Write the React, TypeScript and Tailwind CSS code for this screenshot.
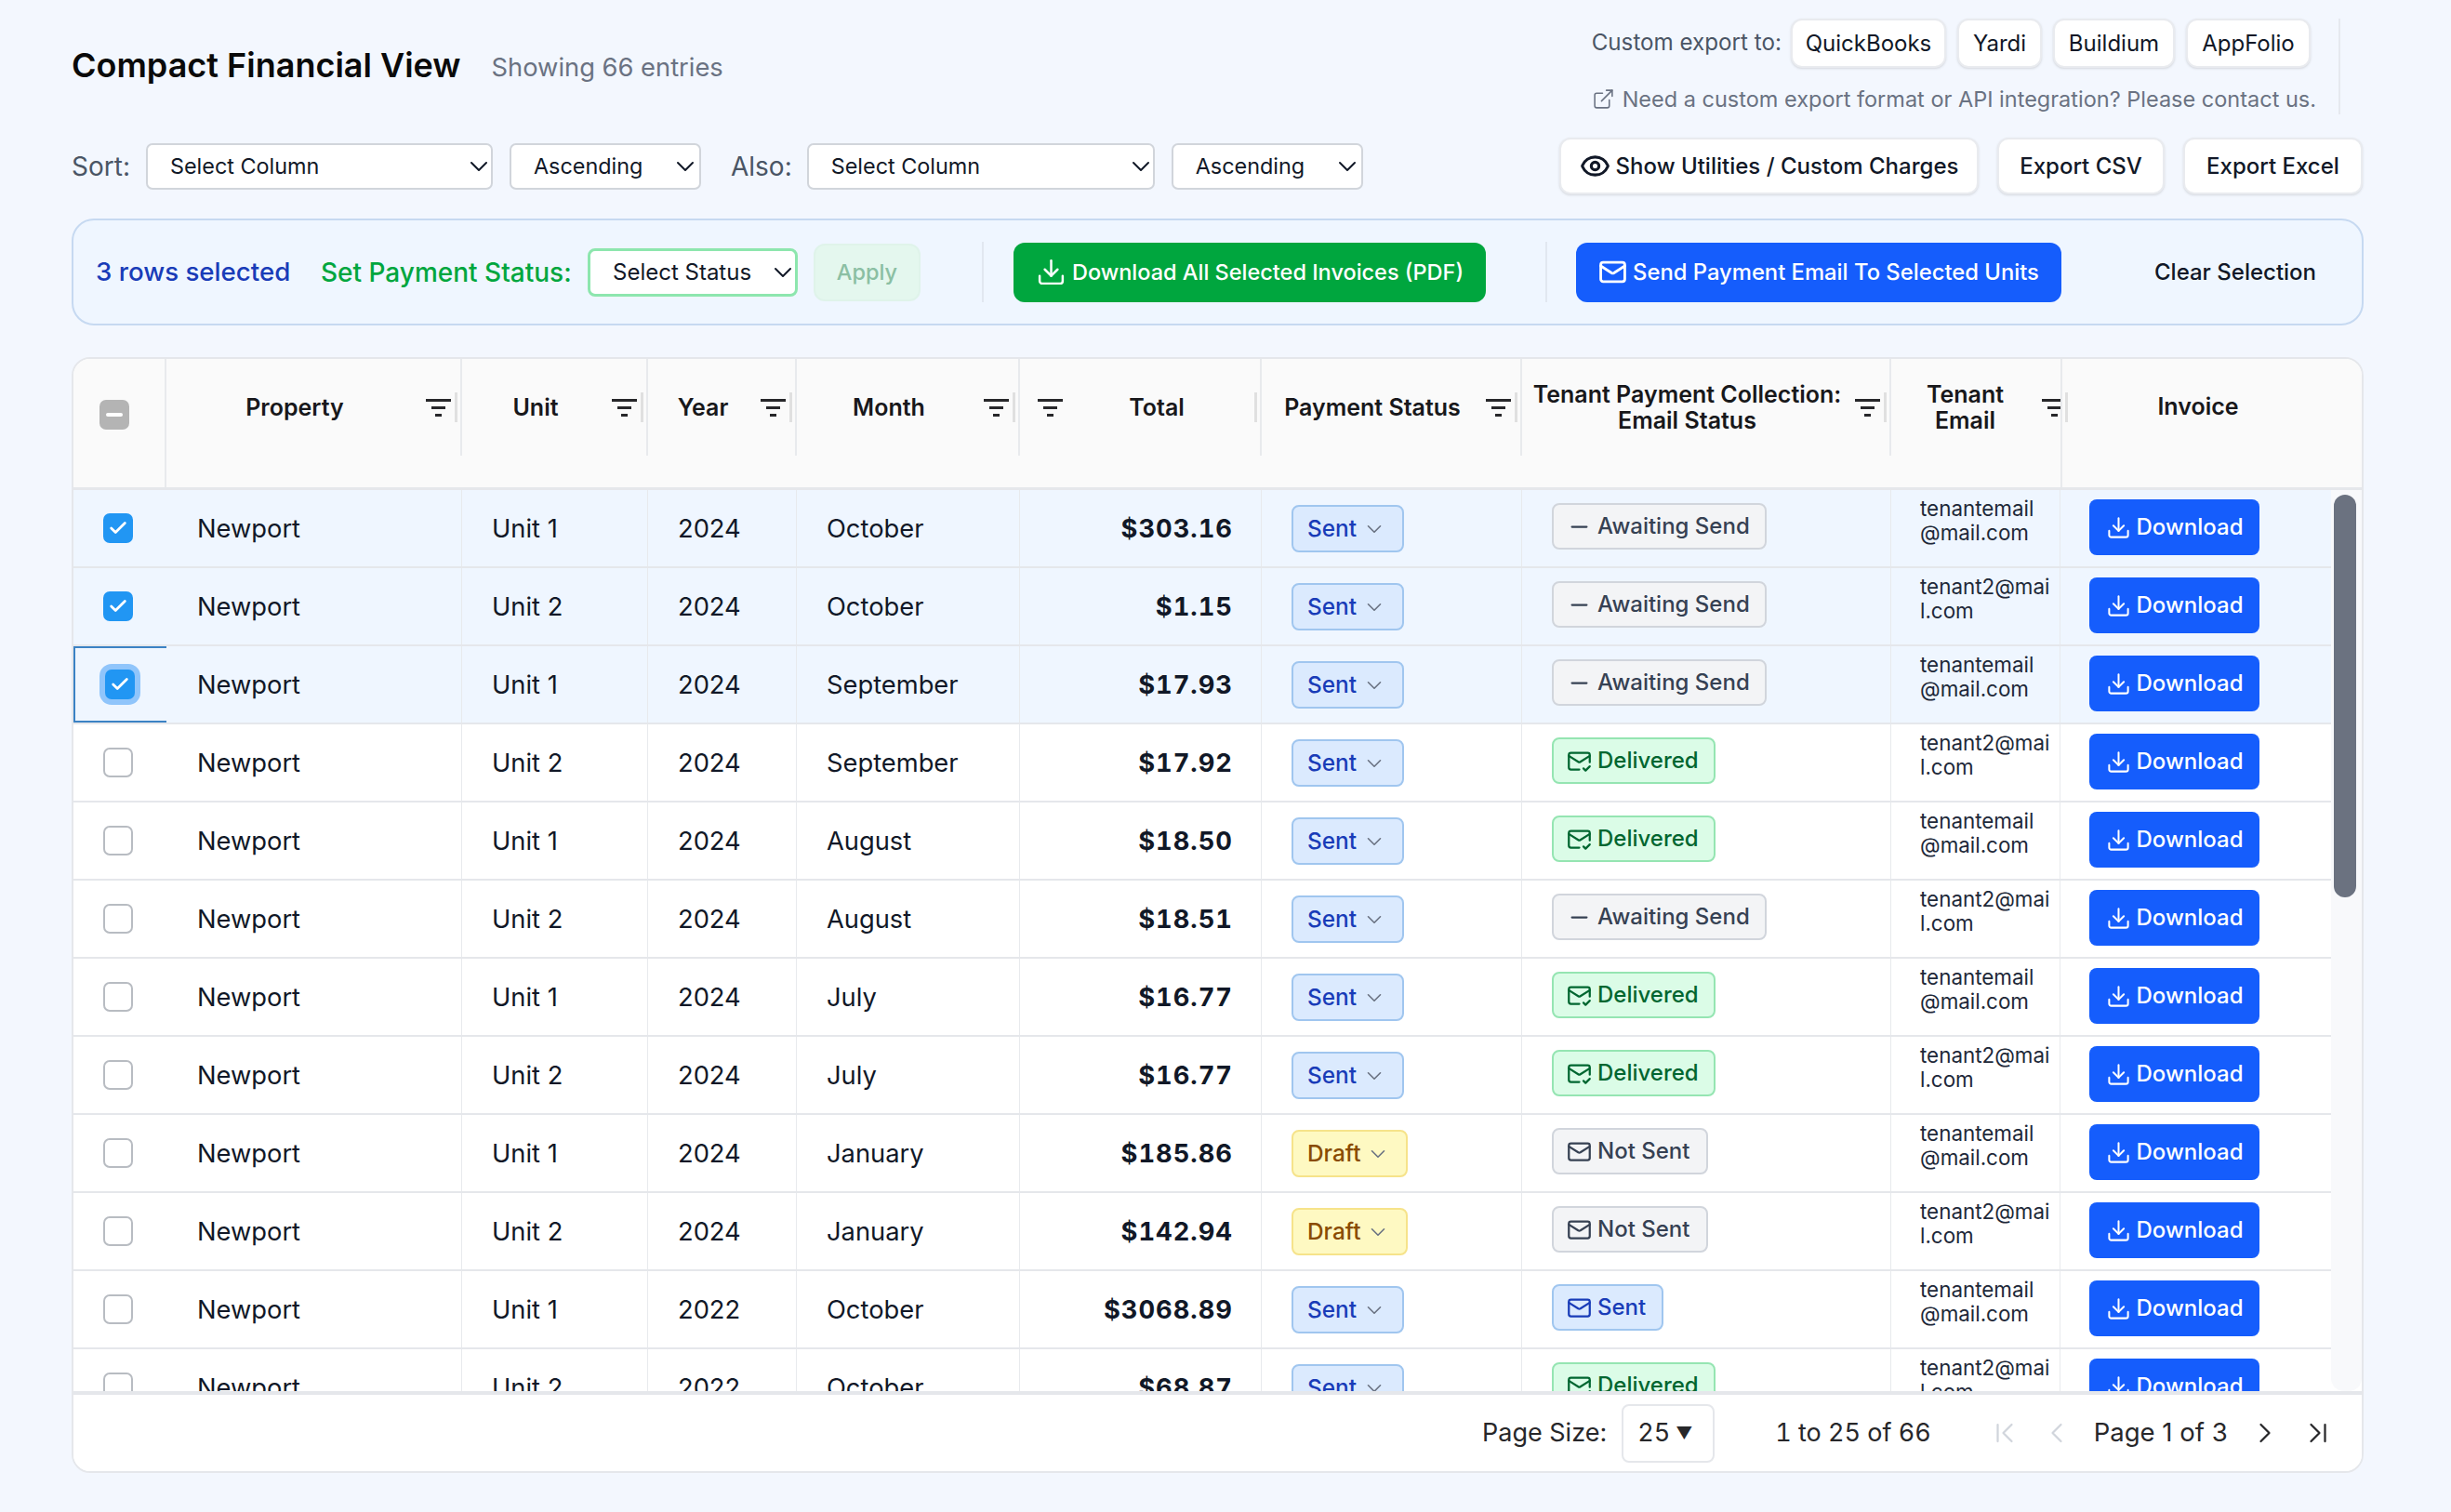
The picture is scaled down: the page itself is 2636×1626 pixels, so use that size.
import { ChevronDown, ChevronLeft, ChevronRight, ChevronFirst, ChevronLast, Download, ExternalLink, Eye, Mail, MailCheck, Minus, Check } from 'lucide-react';

type PayStatus = 'Sent' | 'Draft';
type EmailStatus = 'Awaiting Send' | 'Delivered' | 'Not Sent' | 'Sent';

interface Row {
  unit: string;
  year: string;
  month: string;
  total: string;
  pay: PayStatus;
  email: EmailStatus;
}

const rows: Row[] = [
  { unit: 'Unit 1', year: '2024', month: 'October', total: '$303.16', pay: 'Sent', email: 'Awaiting Send' },
  { unit: 'Unit 2', year: '2024', month: 'October', total: '$1.15', pay: 'Sent', email: 'Awaiting Send' },
  { unit: 'Unit 1', year: '2024', month: 'September', total: '$17.93', pay: 'Sent', email: 'Awaiting Send' },
  { unit: 'Unit 2', year: '2024', month: 'September', total: '$17.92', pay: 'Sent', email: 'Delivered' },
  { unit: 'Unit 1', year: '2024', month: 'August', total: '$18.50', pay: 'Sent', email: 'Delivered' },
  { unit: 'Unit 2', year: '2024', month: 'August', total: '$18.51', pay: 'Sent', email: 'Awaiting Send' },
  { unit: 'Unit 1', year: '2024', month: 'July', total: '$16.77', pay: 'Sent', email: 'Delivered' },
  { unit: 'Unit 2', year: '2024', month: 'July', total: '$16.77', pay: 'Sent', email: 'Delivered' },
  { unit: 'Unit 1', year: '2024', month: 'January', total: '$185.86', pay: 'Draft', email: 'Not Sent' },
  { unit: 'Unit 2', year: '2024', month: 'January', total: '$142.94', pay: 'Draft', email: 'Not Sent' },
  { unit: 'Unit 1', year: '2022', month: 'October', total: '$3068.89', pay: 'Sent', email: 'Sent' },
  { unit: 'Unit 2', year: '2022', month: 'October', total: '$68.87', pay: 'Sent', email: 'Delivered' },
];

function FilterIcon({ className = '' }: { className?: string }) {
  return (
    <svg width="27" height="19" viewBox="0 0 27 19" className={className} fill="#27272a">
      <rect x="0" y="0" width="27" height="3" />
      <rect x="6" y="8" width="15" height="3" />
      <rect x="10" y="16" width="7" height="3" />
    </svg>
  );
}

function ResizeBar({ className = '' }: { className?: string }) {
  return <div className={`h-[32px] w-[3px] shrink-0 bg-[#e0e0e0] ${className}`} />;
}

function Dropdown({ label, width, chevron }: { label: string; width: string; chevron: string }) {
  return (
    <div className={`flex h-[50px] items-center justify-between rounded-[7px] border-2 border-[#d1d5db] bg-white pl-[24px] text-[23.4px] text-[#111827] ${width}`}>
      <span>{label}</span>
      <ChevronDown size={32} strokeWidth={1.5} className={chevron} />
    </div>
  );
}

function ExportChip({ label, width }: { label: string; width: string }) {
  return (
    <div className={`flex h-[53px] items-center justify-center rounded-[12px] border-2 border-[#e9ebef] bg-white text-[24px] text-[#111827] shadow-sm ${width}`}>
      {label}
    </div>
  );
}

function ActionButton({ children, width }: { children: React.ReactNode; width: string }) {
  return (
    <div className={`flex h-[61px] items-center justify-center gap-[6px] rounded-[12px] border-2 border-[#e9ebef] bg-white text-[24px] font-medium text-[#111827] shadow-sm ${width}`}>
      {children}
    </div>
  );
}

function Checkbox({ checked, focused }: { checked: boolean; focused?: boolean }) {
  if (checked) {
    return (
      <div className={`flex h-[32px] w-[32px] items-center justify-center rounded-[7px] bg-[#2196f3] ${focused ? 'ring-[6px] ring-[#90c5fb]' : ''}`}>
        <Check size={22} strokeWidth={3} color="white" />
      </div>
    );
  }
  return <div className="h-[32px] w-[32px] rounded-[7px] border-2 border-[#b8bcc2] bg-white" />;
}

function PayBadge({ status }: { status: PayStatus }) {
  const tone = status === 'Sent'
    ? 'w-[121px] bg-blue-100 border-[#a0c6ef] text-blue-800'
    : 'w-[125px] bg-yellow-100 border-[#f6e38a] text-yellow-800';
  return (
    <div className={`flex h-[51px] items-center gap-[6px] rounded-[8px] border-2 pl-[15px] pt-[1px] text-[24.4px] font-medium ${tone}`}>
      <span>{status}</span>
      <ChevronDown size={26} strokeWidth={1.5} className="text-gray-500" />
    </div>
  );
}

function EmailBadge({ status }: { status: EmailStatus }) {
  const base = 'flex h-[50px] items-center gap-[6px] rounded-[8px] border-2 pl-[14px] text-[24px] font-medium -mt-[4px]';
  if (status === 'Delivered') {
    return (
      <div className={`${base} w-[176px] border-[#95e5b2] bg-green-100 text-green-800`}>
        <MailCheck size={27} strokeWidth={2} />
        <span>Delivered</span>
      </div>
    );
  }
  if (status === 'Sent') {
    return (
      <div className={`${base} w-[120px] border-[#a0c6ef] bg-blue-100 text-blue-800`}>
        <Mail size={27} strokeWidth={2} />
        <span>Sent</span>
      </div>
    );
  }
  if (status === 'Not Sent') {
    return (
      <div className={`${base} w-[168px] border-gray-300 bg-gray-100 text-gray-700`}>
        <Mail size={27} strokeWidth={2} />
        <span>Not Sent</span>
      </div>
    );
  }
  return (
    <div className={`${base} w-[231px] border-gray-300 bg-gray-100 text-gray-700`}>
      <Minus size={27} strokeWidth={2} />
      <span>Awaiting Send</span>
    </div>
  );
}

function DataRow({ row, index }: { row: Row; index: number }) {
  const selected = index < 3;
  const focused = index === 2;
  const cell = 'flex items-center border-r border-[#e8eaed]';
  return (
    <div className={`grid h-[84px] shrink-0 grid-cols-[100px_318px_200px_160px_240px_260px_280px_397px_182px_291px] border-b-2 border-[#e5e7eb] text-[27.3px] text-[#111827] ${selected ? 'bg-blue-50' : 'bg-white'}`}>
      <div className={`flex items-center pl-[32px] ${focused ? 'border-y-2 border-l-2 border-[#3b82c4]' : ''}`}>
        <Checkbox checked={selected} focused={focused} />
      </div>
      <div className={`${cell} pl-[33px] pt-[2px]`}>Newport</div>
      <div className={`${cell} pl-[32px] pt-[2px]`}>{row.unit}</div>
      <div className={`${cell} pl-[32px] pt-[2px]`}>{row.year}</div>
      <div className={`${cell} pl-[32px] pt-[2px]`}>{row.month}</div>
      <div className={`${cell} justify-end pr-[30px] pt-[2px] font-bold tabular-nums tracking-[1px]`}>{row.total}</div>
      <div className={`${cell} pl-[32px]`}><PayBadge status={row.pay} /></div>
      <div className={`${cell} pl-[32px]`}><EmailBadge status={row.email} /></div>
      <div className={`${cell} pl-[31px] pr-[7px] pb-[17px] text-[22.4px] leading-[26px] text-gray-800 [word-break:break-all]`}>
        {index % 2 === 0 ? 'tenantemail@mail.com' : 'tenant2@mail.com'}
      </div>
      <div className="flex items-center pl-[31px]">
        <div className="-mt-[2px] flex h-[60px] w-[183px] items-center justify-center gap-[6px] rounded-[8px] bg-blue-600 text-[24px] font-medium text-white">
          <Download size={27} strokeWidth={1.8} />
          <span>Download</span>
        </div>
      </div>
    </div>
  );
}

function HeaderCell({ width, lines, left }: { width: string; lines: string[]; left?: boolean }) {
  return (
    <div className={`flex h-[104px] items-center border-r-2 border-[#e8eaed] pr-[3px] ${width}`}>
      {left && <FilterIcon className="ml-[19px] shrink-0" />}
      <div className={`flex-1 text-center leading-[28px] ${left ? '' : 'pr-[3px]'}`}>
        {lines.map((l) => <div key={l}>{l}</div>)}
      </div>
      {!left && <FilterIcon className="shrink-0" />}
      <ResizeBar className="ml-[4px]" />
    </div>
  );
}

export default function App() {
  return (
    <div className="flex h-[1626px] w-[2636px] flex-col overflow-hidden bg-[#f3f7fe] pl-[77px] pr-[94px] font-['Inter',sans-serif]">
      {/* top row */}
      <div className="flex h-[136px] shrink-0 items-start justify-between">
        <div className="mt-[46px] flex items-baseline gap-[33px]">
          <h1 className="text-[36px] font-semibold leading-[48px] text-[#0a0a0a]">Compact Financial View</h1>
          <span className="-translate-y-[1.5px] text-[27.3px] text-gray-500">Showing 66 entries</span>
        </div>
        <div className="mr-[25px] mt-[20px] flex h-[103px] flex-col items-start border-r-2 border-[#e6e9ef] pr-[24px]">
          <div className="flex items-center gap-[12px]">
            <span className="-mr-[2px] text-[24.2px] text-gray-600">Custom export to:</span>
            <ExportChip label="QuickBooks" width="w-[167px]" />
            <ExportChip label="Yardi" width="w-[91px]" />
            <ExportChip label="Buildium" width="w-[131px]" />
            <ExportChip label="AppFolio" width="w-[134px]" />
          </div>
          <div className="mt-[16px] flex items-center gap-[8px] text-[23.5px] text-gray-500">
            <ExternalLink size={25} strokeWidth={1.5} />
            <span>Need a custom export format or API integration? Please contact us.</span>
          </div>
        </div>
      </div>

      {/* sort row */}
      <div className="flex h-[99px] shrink-0 items-start justify-between pt-[12px]">
        <div className="mt-[6px] flex items-center">
          <span className="mr-[17px] text-[28px] text-gray-600">Sort:</span>
          <Dropdown label="Select Column" width="w-[373px]" chevron="-mr-[3px]" />
          <div className="w-[18px]" />
          <Dropdown label="Ascending" width="w-[206px]" chevron="-mr-[1px]" />
          <span className="ml-[32px] mr-[16px] text-[28px] text-gray-600">Also:</span>
          <Dropdown label="Select Column" width="w-[374px]" chevron="-mr-[3px]" />
          <div className="w-[18px]" />
          <Dropdown label="Ascending" width="w-[206px]" chevron="-mr-[1px]" />
        </div>
        <div className="mr-[1px] flex items-center gap-[20px]">
          <ActionButton width="w-[451px]">
            <Eye size={33} strokeWidth={2.3} />
            <span>Show Utilities / Custom Charges</span>
          </ActionButton>
          <ActionButton width="w-[180px]">Export CSV</ActionButton>
          <ActionButton width="w-[193px]">Export Excel</ActionButton>
        </div>
      </div>

      {/* selection bar */}
      <div className="flex h-[115px] w-[2465px] shrink-0 items-center rounded-[24px] border-2 border-[#c6d9f1] bg-blue-50 pl-[24px] text-[28px] font-medium">
        <span className="w-[242px] text-[27.7px] text-blue-800">3 rows selected</span>
        <span className="w-[287px] text-green-600">Set Payment Status:</span>
        <div className="flex h-[52px] w-[226px] items-center justify-between rounded-[8px] border-[3px] border-[#8de6ae] bg-white pl-[24px] text-[24px] font-normal text-[#111827]">
          <span>Select Status</span>
          <ChevronDown size={32} strokeWidth={1.5} className="-mr-[3px]" />
        </div>
        <div className="ml-[17px] flex h-[62px] w-[115px] items-center justify-center rounded-[12px] border-2 border-[#dff3ea] bg-[#e4f7ee] text-[23.5px] text-[#8bbfa3]">
          Apply
        </div>
        <div className="ml-[66px] h-[65px] w-[2px] bg-[#e1e7f0]" />
        <div className="ml-[32px] flex h-[64px] w-[508px] items-center justify-center gap-[6px] rounded-[12px] bg-green-600 text-[23.5px] text-white">
          <Download size={33} strokeWidth={1.8} />
          <span>Download All Selected Invoices (PDF)</span>
        </div>
        <div className="ml-[64px] h-[65px] w-[2px] bg-[#e1e7f0]" />
        <div className="ml-[31px] flex h-[64px] w-[522px] items-center justify-center gap-[6px] rounded-[12px] bg-blue-600 text-[23.8px] text-white">
          <Mail size={31} strokeWidth={2.2} />
          <span>Send Payment Email To Selected Units</span>
        </div>
        <span className="ml-[100px] text-[24px] text-[#111827]">Clear Selection</span>
      </div>

      {/* table */}
      <div className="mt-[34px] flex h-[1200px] w-[2465px] shrink-0 flex-col overflow-hidden rounded-[20px] border-2 border-[#e5e7eb] bg-white">
        {/* header */}
        <div className="flex h-[141px] shrink-0 items-start border-b-[3px] border-[#e5e7eb] bg-[#fafafa] text-[25px] font-semibold text-[#18181b]">
          <div className="flex h-full w-[100px] shrink-0 items-start border-r-2 border-[#e8eaed] pl-[28px] pt-[44px]">
            <div className="flex h-[32px] w-[32px] items-center justify-center rounded-[7px] bg-[#b4b4b4]">
              <div className="h-[4px] w-[18px] rounded-full bg-white" />
            </div>
          </div>
          <HeaderCell width="w-[318px]" lines={['Property']} />
          <HeaderCell width="w-[200px]" lines={['Unit']} />
          <HeaderCell width="w-[160px]" lines={['Year']} />
          <HeaderCell width="w-[240px]" lines={['Month']} />
          <HeaderCell width="w-[260px]" lines={['Total']} left />
          <HeaderCell width="w-[280px]" lines={['Payment Status']} />
          <HeaderCell width="w-[397px]" lines={['Tenant Payment Collection:', 'Email Status']} />
          <div className="flex h-[104px] w-[182px] items-center overflow-hidden">
            <div className="flex-1 pr-[3px] text-center leading-[28px]">
              <div>Tenant</div>
              <div>Email</div>
            </div>
            <div className="w-[20px] shrink-0 overflow-hidden"><FilterIcon /></div>
          </div>
          <div className="flex h-full flex-1 items-start border-l-2 border-[#e8eaed] pr-[36px]">
            <div className="flex h-[104px] flex-1 items-center">
              <ResizeBar className="ml-[3px]" />
              <div className="flex-1 text-center">Invoice</div>
            </div>
          </div>
        </div>

        {/* body */}
        <div className="flex min-h-0 flex-1 overflow-hidden">
          <div className="flex w-[2428px] shrink-0 flex-col overflow-hidden">
            {rows.map((r, i) => <DataRow key={i} row={r} index={i} />)}
          </div>
          <div className="flex flex-1 justify-center rounded-b-[14px] bg-[#f8f9fb] pr-[4px] pt-[5px]">
            <div className="h-[433px] w-[24px] rounded-full bg-[#6b7280]" />
          </div>
        </div>

        {/* footer */}
        <div className="flex h-[86px] shrink-0 items-center border-t-[4px] border-[#e5e7eb] bg-white text-[27px] text-[#27272a]">
          <span className="ml-[1515px]">Page Size:</span>
          <div className="ml-[16px] flex h-[63px] w-[100px] items-center gap-[6px] rounded-[8px] border-2 border-[#e5e7eb] pl-[15px]">
            <span className="tabular-nums">25</span>
            <span className="text-[18px]">▼</span>
          </div>
          <span className="ml-[65px] tabular-nums">1 to 25 of 66</span>
          <ChevronFirst size={36} strokeWidth={1.5} className="ml-[61px] text-gray-300" />
          <ChevronLeft size={36} strokeWidth={1.5} className="ml-[20px] text-gray-300" />
          <span className="ml-[22px] text-[27.5px]">Page 1 of 3</span>
          <ChevronRight size={36} strokeWidth={1.5} className="ml-[22px]" />
          <ChevronLast size={36} strokeWidth={1.5} className="ml-[21px]" />
        </div>
      </div>
    </div>
  );
}
